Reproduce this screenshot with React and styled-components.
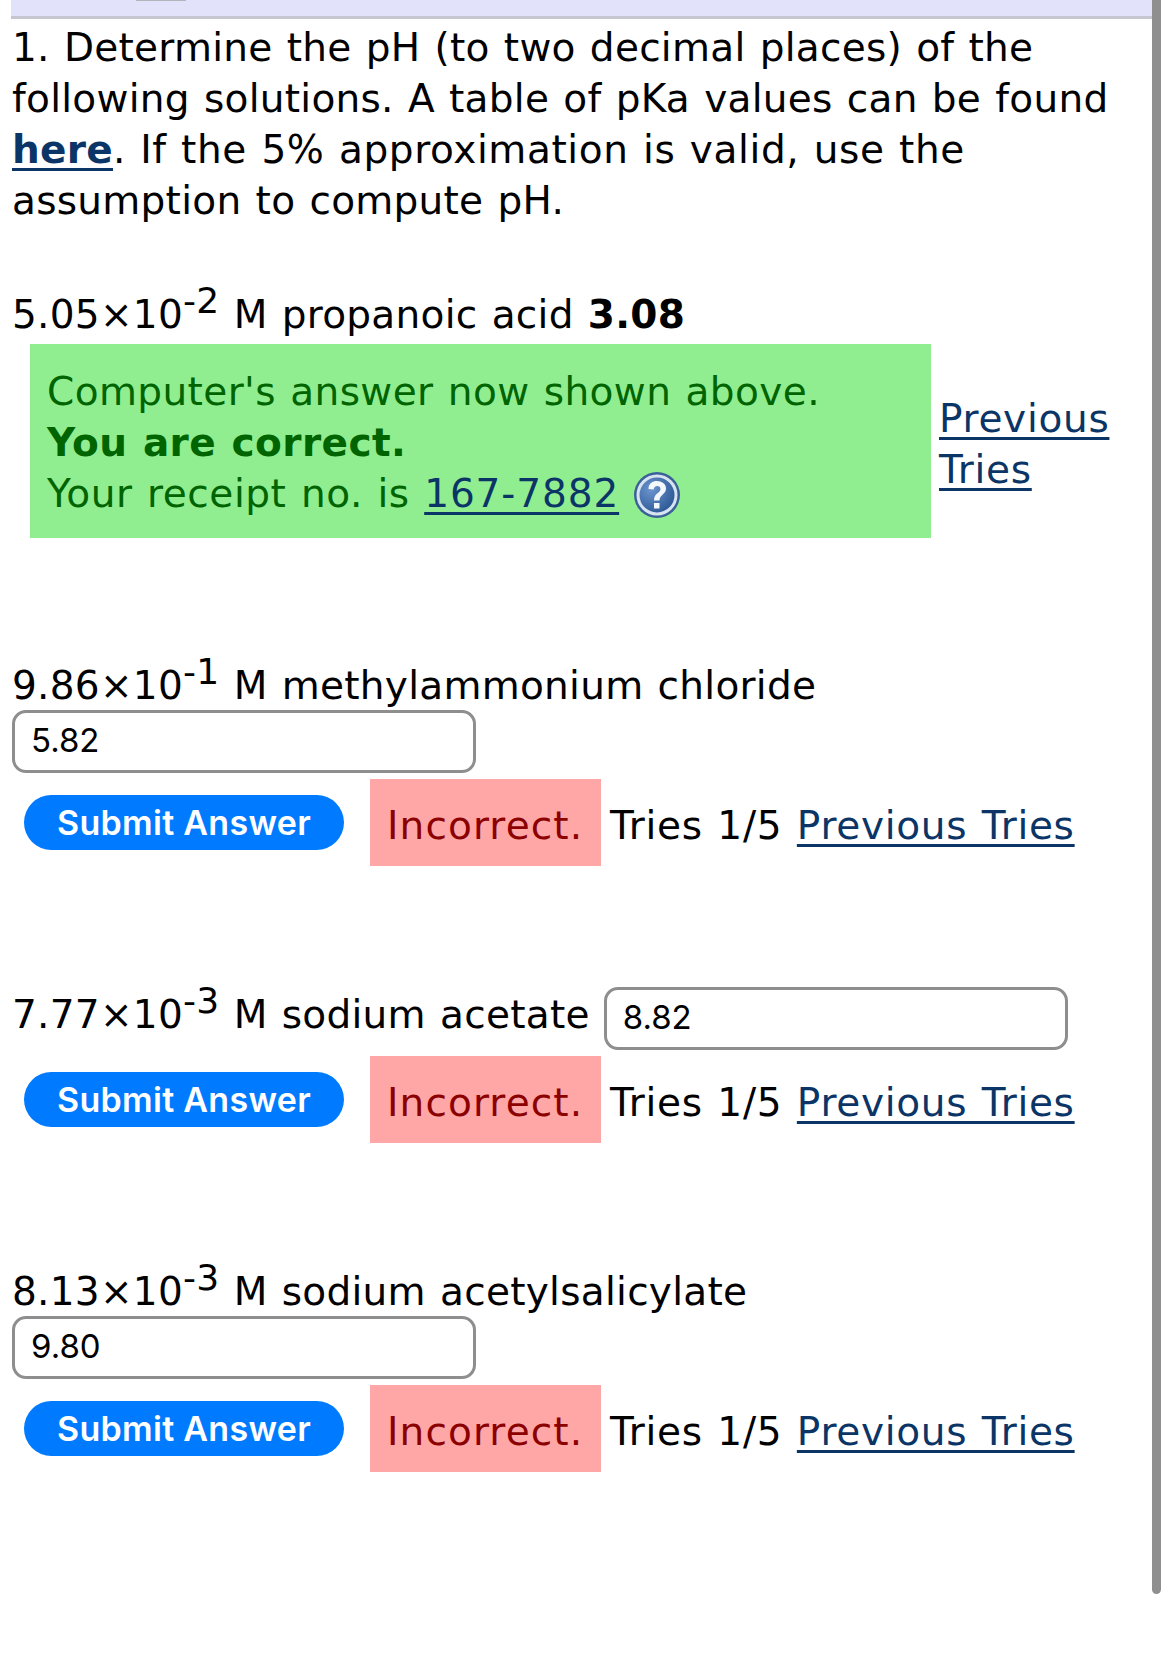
import React from "react";
import styled, { createGlobalStyle } from "styled-components";

const GlobalStyle = createGlobalStyle`
  html, body {
    margin: 0;
    padding: 0;
    background: #ffffff;
  }
`;

const Page = styled.div`
  position: relative;
  width: 1170px;
  height: 1668px;
  overflow: hidden;
  background: #ffffff;
  color: #000000;
  font-family: "DejaVu Sans", Verdana, sans-serif;
  font-size: 39px;
  line-height: 51px;
  letter-spacing: 0.27px;
  word-spacing: 1.5px;
`;

const TopBar = styled.div`
  position: relative;
  margin-left: 11px;
  width: 1150px;
  height: 16px;
  background: #e2e2fa;
  border-bottom: 3px solid #c6c6d0;
`;

const BarTab = styled.span`
  position: absolute;
  left: 125px;
  top: 0;
  width: 50px;
  height: 1px;
  background: #b4b4bc;
`;

const ScrollThumb = styled.div`
  position: absolute;
  left: 1152px;
  top: 0;
  width: 9px;
  height: 1594px;
  background: #8f8f8f;
  border-radius: 0 0 5px 5px;
`;

const Content = styled.div`
  padding-left: 12px;
`;

const Intro = styled.p`
  margin: 3px 0 0;
  width: 1125px;
`;

const WideText = styled.span`
  letter-spacing: 0.6px;
`;

const Link = styled.a`
  color: #0b3566;
  text-decoration: underline;
  text-decoration-thickness: 3px;
  text-underline-offset: 5px;
`;

const BoldLink = styled(Link)`
  font-weight: 700;
`;

const Part = styled.div`
  margin-top: ${(props) => props.$top}px;
`;

const Statement = styled.div`
  display: flex;
  align-items: flex-start;
  box-sizing: border-box;
  height: ${(props) => (props.$tall ? 62 : 51)}px;
  padding-top: 1px;
  white-space: pre;
`;

const Power = styled.sup`
  font-size: 36px;
  line-height: 0;
  vertical-align: 15px;
`;

const Answer = styled.b`
  font-weight: 700;
`;

const CorrectRow = styled.div`
  display: flex;
  align-items: center;
  margin: 5px 0 0 18px;
`;

const CorrectBox = styled.div`
  box-sizing: border-box;
  width: 901px;
  height: 194px;
  padding: 22px 17px 0;
  background: #90ee90;
  color: #006400;
  letter-spacing: 0.4px;
`;

const CorrectTitle = styled.strong`
  display: block;
  font-weight: 700;
`;

const ReceiptLine = styled.div`
  display: flex;
  align-items: center;
  gap: 14px;
  letter-spacing: 0.57px;
`;

const ReceiptLink = styled(Link)`
  letter-spacing: 0.9px;
`;

const HelpBadge = styled.svg`
  display: block;
  margin-top: 3px;
  filter: blur(0.7px);
`;

const SideLink = styled(Link)`
  margin: 6px 0 0 8px;
  width: 190px;
  letter-spacing: 0.7px;
`;

const AnswerInput = styled.input`
  display: block;
  box-sizing: border-box;
  width: 464px;
  height: 63px;
  margin: ${(props) => (props.$inline ? "-2px 0 0 14px" : "0")};
  padding: 0 16px 4px;
  border: 3px solid #8e8e8e;
  border-radius: 14px;
  background: #ffffff;
  color: #000000;
  font-family: Inter, "Liberation Sans", sans-serif;
  font-size: 33px;
  letter-spacing: 0;
  outline: none;
`;

const ResultRow = styled.div`
  display: flex;
  align-items: center;
  margin-top: 6px;
`;

const SubmitButton = styled.button`
  flex: none;
  width: 320px;
  height: 55px;
  margin: 0 26px 0 12px;
  padding: 0;
  border: none;
  border-radius: 28px;
  background: #007bff;
  color: #ffffff;
  font-family: Inter, "Liberation Sans", sans-serif;
  font-size: 34px;
  font-weight: 600;
  letter-spacing: 0.3px;
`;

const IncorrectBox = styled.div`
  box-sizing: border-box;
  width: 231px;
  height: 87px;
  padding: 21px 0 0 17px;
  background: #ffa6a6;
  color: #8b0000;
  letter-spacing: 1.1px;
`;

const Tries = styled.div`
  margin: 6px 0 0 9px;
  letter-spacing: 0.7px;
  white-space: pre;
`;

const HelpIcon = () => (
  <HelpBadge width="48" height="48" viewBox="0 0 48 48">
    <defs>
      <radialGradient id="helpFill" cx="35%" cy="35%" r="75%">
        <stop offset="0%" stopColor="#6d95cf" />
        <stop offset="100%" stopColor="#25528f" />
      </radialGradient>
    </defs>
    <circle cx="24" cy="24" r="23" fill="#3a6298" />
    <circle cx="24" cy="24" r="19" fill="url(#helpFill)" stroke="#d7e3f1" strokeWidth="3" />
    <path d="M15.500 18c0-5.500 4-8 8.500-8s9 2.800 9 7.500c0 6-6.500 6-6.500 12h-5.500c0-7.500 6.500-7.500 6.500-11.500 0-1.800-1.500-3-3.300-3s-3.400 1.200-3.500 3.500z" fill="#f4f7fb" />
    <rect x="21" y="32" width="5.500" height="5.500" fill="#f4f7fb" />
  </HelpBadge>
);

const Concentration = ({ value, power }) => (
  <span>
    {value}×10<Power>{power}</Power>
  </span>
);

const Result = () => (
  <ResultRow>
    <SubmitButton type="button">Submit Answer</SubmitButton>
    <IncorrectBox>Incorrect.</IncorrectBox>
    <Tries>
      Tries 1/5 <Link href="#">Previous Tries</Link>
    </Tries>
  </ResultRow>
);

export default function App() {
  return (
    <>
      <GlobalStyle />
      <Page>
        <TopBar>
          <BarTab />
        </TopBar>
        <Content>
          <Intro>
            1. Determine the pH (to two decimal places) of the following solutions. A table of pKa values can be
            found <BoldLink href="#">here</BoldLink>.<WideText> If the 5% approximation is valid, use the </WideText>
            assumption to compute pH.
          </Intro>

          <Part $top={62}>
            <Statement>
              <Concentration value="5.05" power="-2" /> M propanoic acid <Answer>3.08</Answer>
            </Statement>
            <CorrectRow>
              <CorrectBox>
                Computer's answer now shown above.
                <CorrectTitle>You are correct.</CorrectTitle>
                <ReceiptLine>
                  <span>
                    Your receipt no. is <ReceiptLink href="#">167-7882</ReceiptLink>
                  </span>
                  <HelpIcon />
                </ReceiptLine>
              </CorrectBox>
              <SideLink href="#">Previous Tries</SideLink>
            </CorrectRow>
          </Part>

          <Part $top={121}>
            <Statement>
              <Concentration value="9.86" power="-1" /> M methylammonium chloride
            </Statement>
            <AnswerInput defaultValue="5.82" />
            <Result />
          </Part>

          <Part $top={122}>
            <Statement $tall>
              <Concentration value="7.77" power="-3" /> M sodium acetate
              <AnswerInput $inline defaultValue="8.82" />
            </Statement>
            <Result />
          </Part>

          <Part $top={122}>
            <Statement>
              <Concentration value="8.13" power="-3" /> M sodium acetylsalicylate
            </Statement>
            <AnswerInput defaultValue="9.80" />
            <Result />
          </Part>
        </Content>
        <ScrollThumb />
      </Page>
    </>
  );
}
